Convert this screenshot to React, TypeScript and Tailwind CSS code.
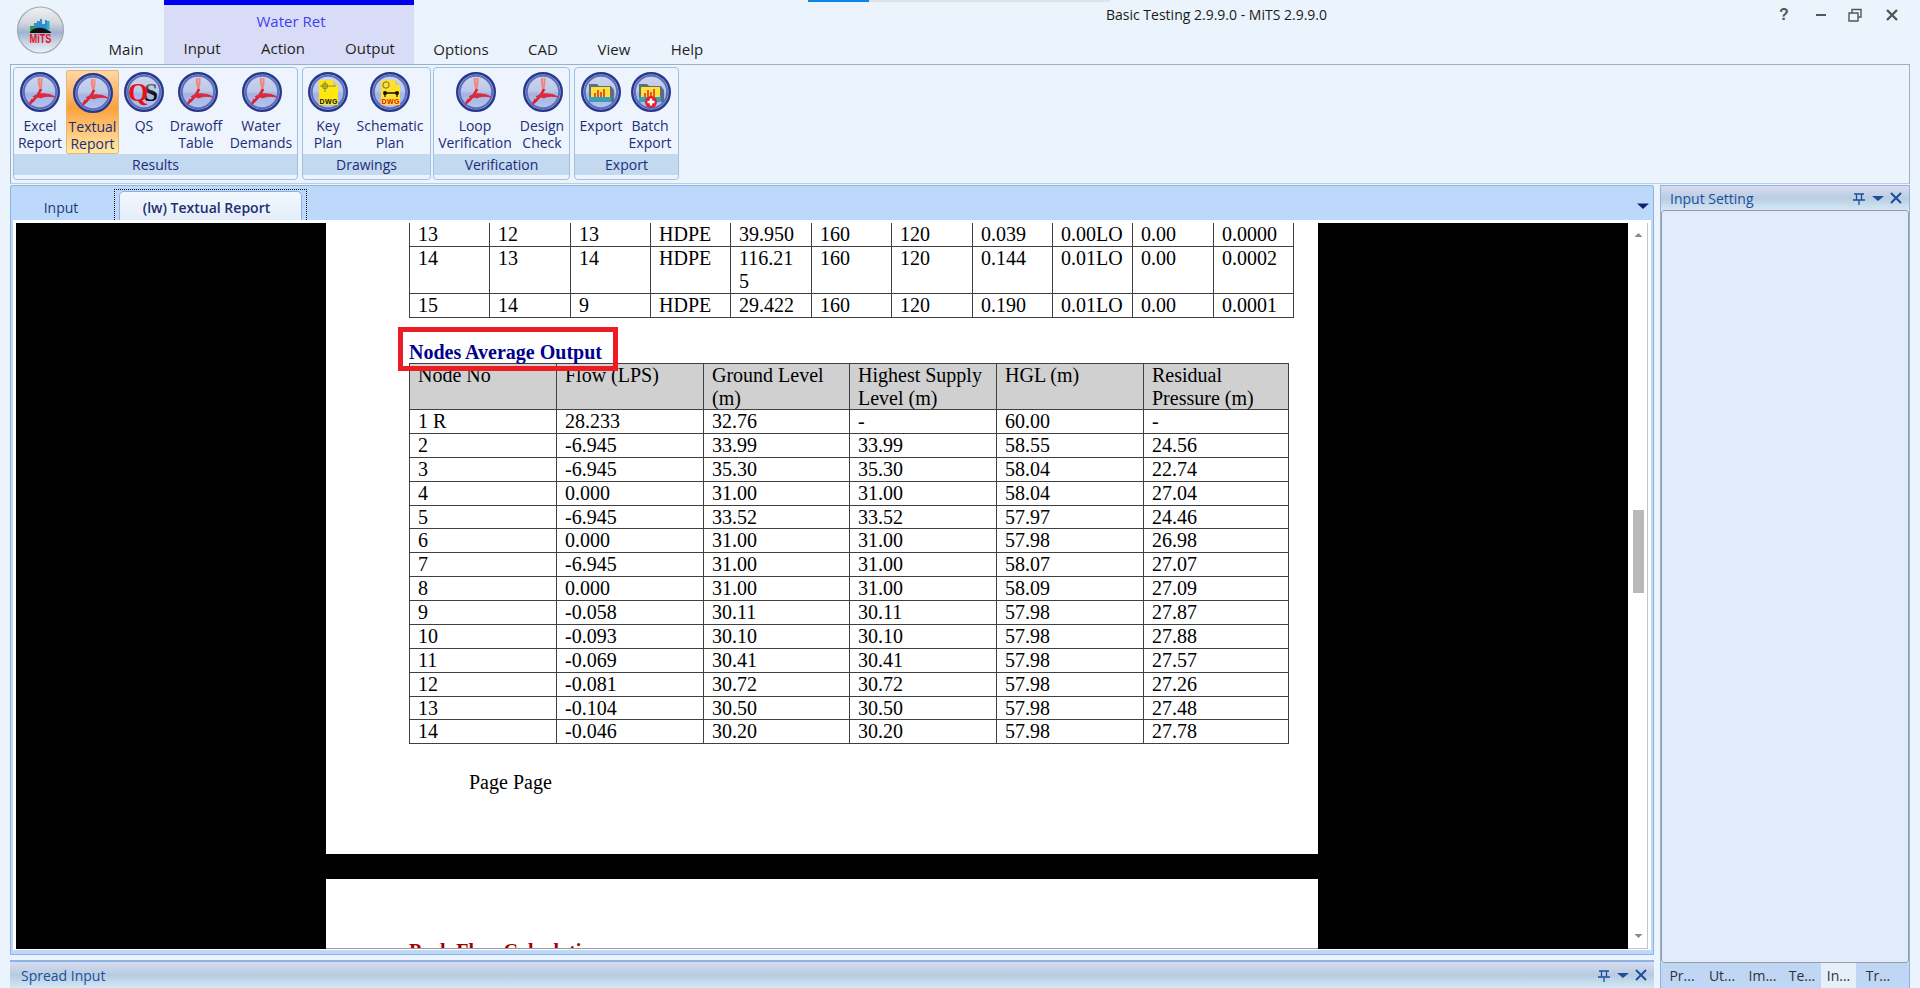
import type { ReactNode } from "react";

const pipes = [
  ["13", "12", "13", "HDPE", "39.950", "160", "120", "0.039", "0.00LO", "0.00", "0.0000"],
  ["14", "13", "14", "HDPE", "116.215", "160", "120", "0.144", "0.01LO", "0.00", "0.0002"],
  ["15", "14", "9", "HDPE", "29.422", "160", "120", "0.190", "0.01LO", "0.00", "0.0001"],
];
const pipeCols = [80, 81, 80, 80, 81, 80, 81, 80, 80, 81, 80];

const nodes = [
  ["1 R", "28.233", "32.76", "-", "60.00", "-"],
  ["2", "-6.945", "33.99", "33.99", "58.55", "24.56"],
  ["3", "-6.945", "35.30", "35.30", "58.04", "22.74"],
  ["4", "0.000", "31.00", "31.00", "58.04", "27.04"],
  ["5", "-6.945", "33.52", "33.52", "57.97", "24.46"],
  ["6", "0.000", "31.00", "31.00", "57.98", "26.98"],
  ["7", "-6.945", "31.00", "31.00", "58.07", "27.07"],
  ["8", "0.000", "31.00", "31.00", "58.09", "27.09"],
  ["9", "-0.058", "30.11", "30.11", "57.98", "27.87"],
  ["10", "-0.093", "30.10", "30.10", "57.98", "27.88"],
  ["11", "-0.069", "30.41", "30.41", "57.98", "27.57"],
  ["12", "-0.081", "30.72", "30.72", "57.98", "27.26"],
  ["13", "-0.104", "30.50", "30.50", "57.98", "27.48"],
  ["14", "-0.046", "30.20", "30.20", "57.98", "27.78"],
];
const nodeCols = [147, 147, 146, 147, 147, 145];
const nodeHead = ["Node No", "Flow (LPS)", "Ground Level (m)", "Highest Supply Level (m)", "HGL (m)", "Residual Pressure (m)"];

function Ring({ children }: { children: ReactNode }) {
  return (
    <svg width="40" height="40" viewBox="0 0 40 40" aria-hidden>
      <defs>
        <linearGradient id="ringFill" x1="0" y1="0" x2="0" y2="1">
          <stop offset="0" stopColor="#cfd7ee" />
          <stop offset="0.48" stopColor="#bcc8e8" />
          <stop offset="0.55" stopColor="#a3b4e2" />
          <stop offset="1" stopColor="#bac6ef" />
        </linearGradient>
      </defs>
      <circle cx="20" cy="20" r="18.8" fill="url(#ringFill)" stroke="#28388c" strokeWidth="2.4" />
      <circle cx="20" cy="20" r="16.2" fill="none" stroke="#5a6ebd" strokeWidth="2" />
      {children}
    </svg>
  );
}

function PdfIcon() {
  return (
    <Ring>
      <path d="M19 6 C18 11 19.5 15 21.5 19 M21.5 6 C22 11 21.5 14 20 19" fill="none" stroke="#f0857c" strokeWidth="2" />
      <path d="M21 17 C18.5 23 14 28 10 31" fill="none" stroke="#e02034" strokeWidth="2.6" />
      <path d="M8.5 34 L11.5 26.5 L14 29 Z" fill="#e02034" />
      <path d="M13 25 C18 21 27 20.5 35 25 C28 23.5 24 24 20 26" fill="#dc2b3e" stroke="#dc2b3e" strokeWidth="1.2" />
    </Ring>
  );
}

function QsIcon() {
  return (
    <Ring>
      <defs>
        <linearGradient id="qsFill" x1="0" y1="0" x2="0" y2="1">
          <stop offset="0" stopColor="#999" />
          <stop offset="0.55" stopColor="#111" />
          <stop offset="1" stopColor="#000" />
        </linearGradient>
      </defs>
      <text x="20" y="29" fontFamily="'Liberation Serif', serif" fontWeight="700" fontSize="25" fill="url(#qsFill)">S</text>
      <text x="4" y="29" fontFamily="'Liberation Serif', serif" fontWeight="700" fontSize="26" fill="#e3101e">Q</text>
    </Ring>
  );
}

function DwgIcon({ red }: { red?: boolean }) {
  return (
    <Ring>
      <path d="M11 8 H25 L30 13 V33 H11 Z" fill={red ? "#ffe02a" : "#ffe812"} />
      <path d="M25 8 L30 13 H25 Z" fill="#c9c9b0" />
      {red ? (
        <>
          <circle cx="16" cy="13" r="3.2" fill="none" stroke="#666" strokeWidth="1" />
          <path d="M15 21 H27" stroke="#111" strokeWidth="1.5" fill="none" />
          <path d="M15 21 V25 M27 21 V25" stroke="#111" strokeWidth="1.2" fill="none" />
          <circle cx="15" cy="21" r="2" fill="#111" />
          <circle cx="27" cy="21" r="2" fill="#111" />
        </>
      ) : (
        <>
          <circle cx="17" cy="14" r="2.5" fill="none" stroke="#8a8a40" strokeWidth="1.2" />
          <path d="M17 9 V20 M12 14 H28" stroke="#8a8a40" strokeWidth="1" />
        </>
      )}
      <text x="20.5" y="31.5" textAnchor="middle" textLength="18" fontFamily="'Liberation Sans', sans-serif" fontWeight="700" fontSize="7" fill={red ? "#e3101e" : "#111"}>DWG</text>
    </Ring>
  );
}

function FolderIcon({ plus }: { plus?: boolean }) {
  return (
    <Ring>
      <path d="M8 12 H16 L18 14 H30 L33 18 V30 H8 Z" fill="#5d6f7d" />
      <rect x="10" y="15" width="19" height="10" fill="#ffe13a" />
      <path d="M14 25 V21 M17 25 V18 M20 25 V20 M23 25 V17" stroke="#e2352c" strokeWidth="1.6" />
      <rect x="8" y="25" width="22" height="5" fill="#35a0b8" />
      {plus ? (
        <>
          <circle cx="20" cy="30" r="6" fill="#e0202e" />
          <path d="M20 26.5 V33.5 M16.5 30 H23.5" stroke="#fff" strokeWidth="2.4" />
        </>
      ) : null}
    </Ring>
  );
}

function MitsLogo() {
  return (
    <svg width="48" height="48" viewBox="0 0 48 48" aria-hidden>
      <defs>
        <linearGradient id="logoFill" x1="0" y1="0" x2="0" y2="1">
          <stop offset="0" stopColor="#f0f1f3" />
          <stop offset="0.35" stopColor="#d3d6dc" />
          <stop offset="0.55" stopColor="#9fb3d1" />
          <stop offset="0.8" stopColor="#d0d8e6" />
          <stop offset="1" stopColor="#f0f3f8" />
        </linearGradient>
      </defs>
      <circle cx="24.5" cy="24" r="23" fill="url(#logoFill)" stroke="#a4aab5" strokeWidth="1.2" />
      <path d="M18 25 V17 H21 V15 H24 V13 H26 V18 H29 V14 H31 V25 Z" fill="#2f8fd0" />
      <rect x="14" y="20" width="5" height="6" fill="#1e9c3c" />
      <rect x="31" y="15" width="2.5" height="9" fill="#28b2c8" />
      <path d="M14 26 C20 20 27 21 35 26 V27 H14 Z" fill="#111" />
      <text x="24.5" y="36.5" textAnchor="middle" textLength="22" lengthAdjust="spacingAndGlyphs" fontFamily="'Liberation Sans', sans-serif" fontWeight="700" fontSize="13" fill="#e5101e">MiTS</text>
    </svg>
  );
}

function RibbonButton({
  width,
  icon,
  lines,
  active,
  textClass = "",
}: {
  width: string;
  icon: ReactNode;
  lines: string[];
  active?: boolean;
  textClass?: string;
}) {
  return (
    <div
      className={`${width} flex h-[84px] flex-col items-center rounded-[2px] pt-[2px] ${
        active ? "border border-[#e2b76f] bg-gradient-to-b from-[#fed7a6] via-[#f9a23c] via-45% to-[#ffeaa8]" : ""
      }`}
    >
      <div className="h-[40px] w-[40px]">{icon}</div>
      <div className={`mt-[5px] whitespace-nowrap text-center text-[14px] leading-[17px] text-[#1c2d78] ${textClass}`}>
        {lines.map((line) => (
          <div key={line}>{line}</div>
        ))}
      </div>
    </div>
  );
}

function RibbonGroup({ width, label, children }: { width: string; label: string; children: ReactNode }) {
  return (
    <div className={`${width} flex h-[113px] shrink-0 flex-col rounded-[4px] border border-[#9dbfe8] bg-[#edf4fd] pb-[3px]`}>
      <div className="flex h-[86px] pt-[2px]">{children}</div>
      <div className="flex h-[21px] items-center justify-center bg-[#c2d9f0] text-[14px] text-[#1c2d78]">{label}</div>
    </div>
  );
}

function PanelButtons() {
  return (
    <svg width="58" height="16" viewBox="0 0 58 16" aria-hidden>
      <path d="M3 4 H13 M5.5 4 V10 M10.5 4 V10 M2 10 H14 M8 10 V15" stroke="#1b4f9c" strokeWidth="1.3" fill="none" />
      <path d="M21 6 H33 L27 11 Z" fill="#1b4f9c" />
      <path d="M40 3 L50 13 M50 3 L40 13" stroke="#1b4f9c" strokeWidth="2" />
    </svg>
  );
}

function PipeTable() {
  return (
    <table className="w-[884px] table-fixed border-collapse">
      <colgroup>
        {pipeCols.map((w, i) => (
          <col key={i} style={{ width: w }} />
        ))}
      </colgroup>
      <tbody>
        {pipes.map((row, r) => (
          <tr key={row[0]} className={r === 0 ? "h-[23px]" : r === 1 ? "h-[47px]" : "h-[24px]"}>
            {row.map((cell, c) => (
              <td
                key={c}
                className={`break-all border border-[#404040] px-[8px] py-0 align-top leading-[23px] ${r === 0 ? "border-t-0" : ""}`}
              >
                {cell}
              </td>
            ))}
          </tr>
        ))}
      </tbody>
    </table>
  );
}

function NodeTable() {
  return (
    <table className="w-[879px] table-fixed border-collapse">
      <colgroup>
        {nodeCols.map((w, i) => (
          <col key={i} style={{ width: w }} />
        ))}
      </colgroup>
      <thead>
        <tr className="h-[46px] bg-[#d0d0d0]">
          {nodeHead.map((h) => (
            <th key={h} className="border border-[#404040] px-[8px] py-0 text-left align-top font-normal leading-[22.5px]">
              {h}
            </th>
          ))}
        </tr>
      </thead>
      <tbody>
        {nodes.map((row) => (
          <tr key={row[0]} className="h-[23.87px]">
            {row.map((cell, c) => (
              <td key={c} className="border border-[#404040] px-[8px] pb-0 pt-[1px] align-top leading-[21.87px]">
                {cell}
              </td>
            ))}
          </tr>
        ))}
      </tbody>
    </table>
  );
}

export default function App() {
  return (
    <div className="relative flex h-[988px] w-[1920px] flex-col overflow-hidden bg-[#ebf3fc] font-['Open_Sans',sans-serif] text-[#1f1f1f]">
      {/* menu tabs and title */}
      <header className="flex h-[64px] shrink-0">
        <div className="w-[92px] pl-[16px] pt-[6px]">
          <MitsLogo />
        </div>
        <div className="w-[68px] self-end pb-[5px] text-center text-[15px] leading-[20px]">Main</div>
        <div className="ml-[4px] flex w-[250px] flex-col bg-[#d8dcf7]">
          <div className="h-[5px] bg-[#0000f0]" />
          <div className="flex h-[33px] items-center justify-center pl-[4px] text-[15px] text-[#3f3ff0]">Water Ret</div>
          <div className="flex flex-1 items-start text-center text-[15px] leading-[20px]">
            <div className="w-[76px]">Input</div>
            <div className="w-[86px]">Action</div>
            <div className="w-[88px]">Output</div>
          </div>
        </div>
        <div className="flex self-end pb-[5px] text-center text-[15px] leading-[20px]">
          <div className="w-[94px]">Options</div>
          <div className="w-[70px]">CAD</div>
          <div className="w-[72px]">View</div>
          <div className="w-[74px]">Help</div>
        </div>
        <div className="relative flex-1">
          <div className="absolute left-[84px] top-0 h-[2px] w-[61px] bg-[#0a84e8]" />
          <div className="absolute left-[145px] top-0 h-[2px] w-[241px] bg-[#dfe3e8]" />
          <div className="whitespace-nowrap pl-[382px] pt-[5px] text-[14px] leading-[20px] text-[#1a1a1a]">
            Basic Testing 2.9.9.0 - MiTS 2.9.9.0
          </div>
        </div>
        <div className="flex h-[30px] w-[155px] items-center text-[#555]">
          <div className="w-[38px] text-center font-['Liberation_Sans',sans-serif] text-[16px] font-bold">?</div>
          <svg width="117" height="16" viewBox="0 0 117 16" aria-hidden>
            <path d="M13 8 H23" stroke="#555" strokeWidth="2" />
            <path d="M46 6 H55 V14 H46 Z M49 6 V2.5 H58 V10 H55" stroke="#555" strokeWidth="1.4" fill="none" />
            <path d="M84 3 L94 13 M94 3 L84 13" stroke="#555" strokeWidth="2.4" />
          </svg>
        </div>
      </header>

      {/* ribbon */}
      <div className="mx-[10px] flex h-[120px] shrink-0 border border-[#9fb0c6] border-b-[#c3cbd6] bg-[#ebf3fc] pl-[2px] pt-[2px]">
        <RibbonGroup width="w-[285px]" label="Results">
          <RibbonButton width="w-[52px]" icon={<PdfIcon />} lines={["Excel", "Report"]} />
          <RibbonButton width="w-[53px]" icon={<PdfIcon />} lines={["Textual", "Report"]} active />
          <RibbonButton width="w-[50px]" icon={<QsIcon />} lines={["QS"]} />
          <RibbonButton width="w-[58px]" icon={<PdfIcon />} lines={["Drawoff", "Table"]} textClass="-ml-[4px]" />
          <RibbonButton width="w-[70px]" icon={<PdfIcon />} lines={["Water", "Demands"]} textClass="-ml-[2px]" />
        </RibbonGroup>
        <RibbonGroup width="ml-[4px] w-[129px]" label="Drawings">
          <RibbonButton width="w-[50px]" icon={<DwgIcon />} lines={["Key", "Plan"]} />
          <RibbonButton width="w-[74px]" icon={<DwgIcon red />} lines={["Schematic", "Plan"]} />
        </RibbonGroup>
        <RibbonGroup width="ml-[2px] w-[137px]" label="Verification">
          <RibbonButton width="w-[84px]" icon={<PdfIcon />} lines={["Loop", "Verification"]} textClass="-ml-[2px]" />
          <RibbonButton width="w-[50px]" icon={<PdfIcon />} lines={["Design", "Check"]} textClass="-ml-[2px]" />
        </RibbonGroup>
        <RibbonGroup width="ml-[4px] w-[105px]" label="Export">
          <RibbonButton width="w-[52px]" icon={<FolderIcon />} lines={["Export"]} />
          <RibbonButton width="w-[48px]" icon={<FolderIcon plus />} lines={["Batch", "Export"]} textClass="-ml-[2px]" />
        </RibbonGroup>
      </div>

      {/* work area */}
      <div className="flex min-h-0 flex-1 pl-[10px] pt-[1px]">
        <div className="flex w-[1644px] shrink-0 flex-col gap-[5px]">
          <div className="flex h-[770px] flex-col rounded-t-[2px] border border-[#8db2e3] bg-[#bcd9fc]">
            <div className="flex h-[34px] shrink-0 items-end">
              <div className="flex h-[30px] w-[103px] items-center justify-center pr-[3px] pt-[4px] text-[14px] text-[#1e3a78]">Input</div>
              <div className="flex h-[31px] w-[193px] border-x border-t border-dotted border-x-black border-t-black px-[4px] pt-[1px]">
                <div className="flex flex-1 items-center justify-center rounded-t-[5px] border-x border-t border-[#8db2e3] bg-gradient-to-b from-[#f3f8fe] to-[#e3eefb] pr-[8px] pt-[3px] text-[14px] font-semibold text-[#1e2f6e]">
                  (lw) Textual Report
                </div>
              </div>
              <div className="flex-1" />
              <svg className="mb-[10px] mr-[3px]" width="14" height="8" viewBox="0 0 14 8" aria-hidden>
                <path d="M1 1.5 H13 L7 7 Z" fill="#14206e" />
              </svg>
            </div>
            <div className="mx-[2px] mb-[4px] flex min-h-0 flex-1 bg-white pb-[1px] pl-[3px] pr-[3px] pt-[3px]">
              <div className="relative min-w-0 flex-1 overflow-hidden bg-black font-['Liberation_Serif',serif] text-[20px] leading-[23px] text-black">
                <div className="relative mx-auto h-[631px] w-[992px] bg-white pl-[83px]">
                  <PipeTable />
                  <h2 className="mt-[23px] h-[22px] font-bold text-[#00008b]">Nodes Average Output</h2>
                  <NodeTable />
                  <p className="ml-[60px] mt-[27px]">Page Page</p>
                  <div className="absolute left-[72px] top-[104px] h-[44px] w-[220px] border-[5px] border-[#ed1c24]" />
                </div>
                <div className="mx-auto mt-[25px] h-[100px] w-[992px] bg-white pl-[83px] pt-[61px]">
                  <h2 className="font-bold text-[#a30000]">Peak Flow Calculation</h2>
                </div>
                <div className="absolute bottom-0 left-[310px] h-px w-[992px] bg-[#9a9a9a]" />
              </div>
              <div className="relative h-full w-[20px] shrink-0 border-b border-r border-[#c4c4c4] bg-white">
                <svg className="absolute left-[6px] top-[9px]" width="9" height="6" viewBox="0 0 9 6" aria-hidden>
                  <path d="M0.5 5 H8.5 L4.5 1 Z" fill="#8a8a8a" />
                </svg>
                <div className="absolute left-[5px] top-[287px] h-[83px] w-[11px] bg-[#b9b9b9]" />
                <svg className="absolute bottom-[9px] left-[6px]" width="9" height="6" viewBox="0 0 9 6" aria-hidden>
                  <path d="M0.5 1 H8.5 L4.5 5 Z" fill="#8a8a8a" />
                </svg>
              </div>
            </div>
          </div>
          <div className="flex h-[28px] items-center justify-between border-t-2 border-[#8db2e3] bg-gradient-to-b from-[#d8dcf0] via-[#b7cbe1] to-[#d3e8f6] pl-[11px]">
            <span className="text-[14px] text-[#1b4f9c]">Spread Input</span>
            <PanelButtons />
          </div>
        </div>

        <div className="ml-[6px] flex w-[250px] shrink-0 flex-col border-x border-[#8db2e3]">
          <div className="flex h-[25px] shrink-0 items-center justify-between border-t border-[#8db2e3] bg-gradient-to-b from-[#dcdcf0] via-[#b9cde2] to-[#d3e8f6] pl-[9px]">
            <span className="text-[14px] text-[#1b4f9c]">Input Setting</span>
            <PanelButtons />
          </div>
          <div className="flex-1 rounded-[3px] border border-[#9a9a9a] bg-[#e0ecfc]" />
          <div className="flex h-[25px] shrink-0 items-center bg-[#bfd6f4] text-center text-[14px] text-[#333]">
            <div className="w-[41px] pl-[1px]">Pr...</div>
            <div className="w-[40px]">Ut...</div>
            <div className="w-[41px]">Im...</div>
            <div className="w-[38px]">Te...</div>
            <div className="flex h-full w-[35px] items-center justify-center bg-[#e6f0fb]">In...</div>
            <div className="w-[44px]">Tr...</div>
          </div>
        </div>
      </div>
    </div>
  );
}
